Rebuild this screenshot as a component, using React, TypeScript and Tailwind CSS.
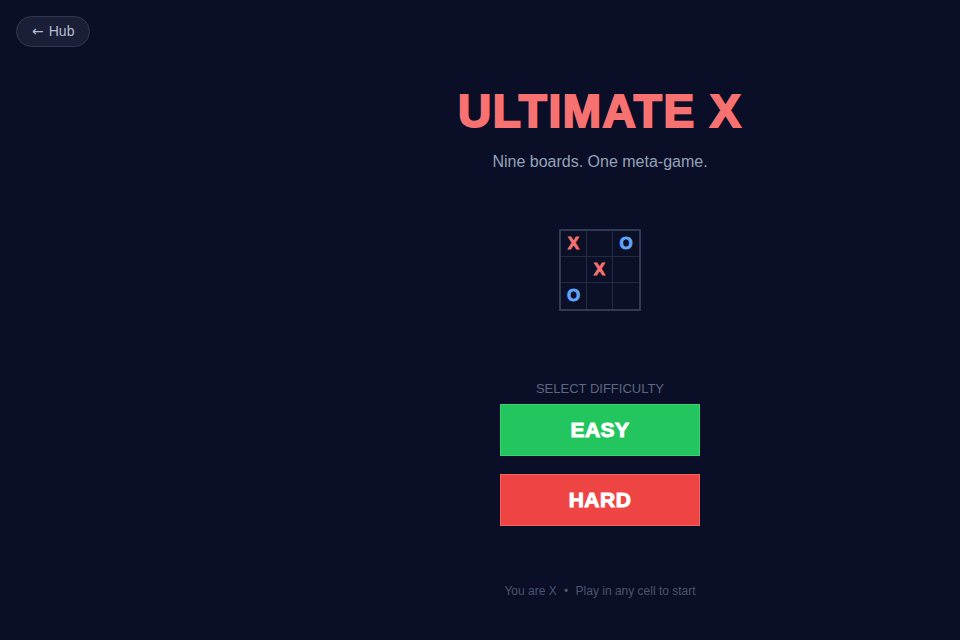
const BOARD: string[] = ["X", "", "O", "", "X", "", "O", "", ""];

function MiniBoard() {
  return (
    <div className="grid grid-cols-3 border-2 border-[#2f3a55] bg-[#0b1026]">
      {BOARD.map((c, i) => (
        <div
          key={i}
          className={`w-[26px] h-[26px] flex items-center justify-center text-[17px] font-bold border-[#222b44] ${
            i % 3 !== 2 ? "border-r" : ""
          } ${i < 6 ? "border-b" : ""} ${
            c === "X"
              ? "text-[#f87171] [-webkit-text-stroke:0.8px_#f87171]"
              : "text-[#60a5fa] [-webkit-text-stroke:0.8px_#60a5fa]"
          }`}
        >
          {c}
        </div>
      ))}
    </div>
  );
}

export default function App() {
  return (
    <div
      className="relative w-full h-[640px] bg-[#0a0e27] overflow-hidden"
      style={{ fontFamily: '"Liberation Sans", Arial, sans-serif' }}
    >
      <button className="absolute left-4 top-4 h-[31px] px-[15px] rounded-full bg-[#1a1e36] border border-[#33384f] text-[14px] text-[#b4bdd0] flex items-center gap-[5px]">
        <span style={{ fontFamily: '"DejaVu Sans", sans-serif' }}>←</span>
        <span>Hub</span>
      </button>
      <div className="flex h-full">
        <div className="w-[240px] shrink-0" />
        <div className="flex-1 flex flex-col items-center">
          <h1 className="mt-[85px] text-[46px] leading-[52px] font-black text-[#f87171] tracking-[1.5px] [-webkit-text-stroke:2px_#f87171]">
            ULTIMATE X
          </h1>
          <p className="mt-[13px] text-[16px] text-[#94a3b8]">Nine boards. One meta-game.</p>
          <div className="mt-[55px]">
            <MiniBoard />
          </div>
          <div className="mt-[68px] text-[13px] uppercase text-[#5d6780]">Select difficulty</div>
          <button className="mt-[5px] w-[200px] h-[52px] bg-[#22c55e] border border-[#4ade80]/60 text-white text-[21px] font-black tracking-[0.5px] [-webkit-text-stroke:1px_#ffffff]">
            EASY
          </button>
          <button className="mt-[18px] w-[200px] h-[52px] bg-[#ef4444] border border-[#f87171]/70 text-white text-[21px] font-black tracking-[0.5px] [-webkit-text-stroke:1px_#ffffff]">
            HARD
          </button>
          <p className="mt-[56px] text-[12px] text-[#4b5570]">
            You are X <span className="mx-1">•</span> Play in any cell to start
          </p>
        </div>
      </div>
    </div>
  );
}
